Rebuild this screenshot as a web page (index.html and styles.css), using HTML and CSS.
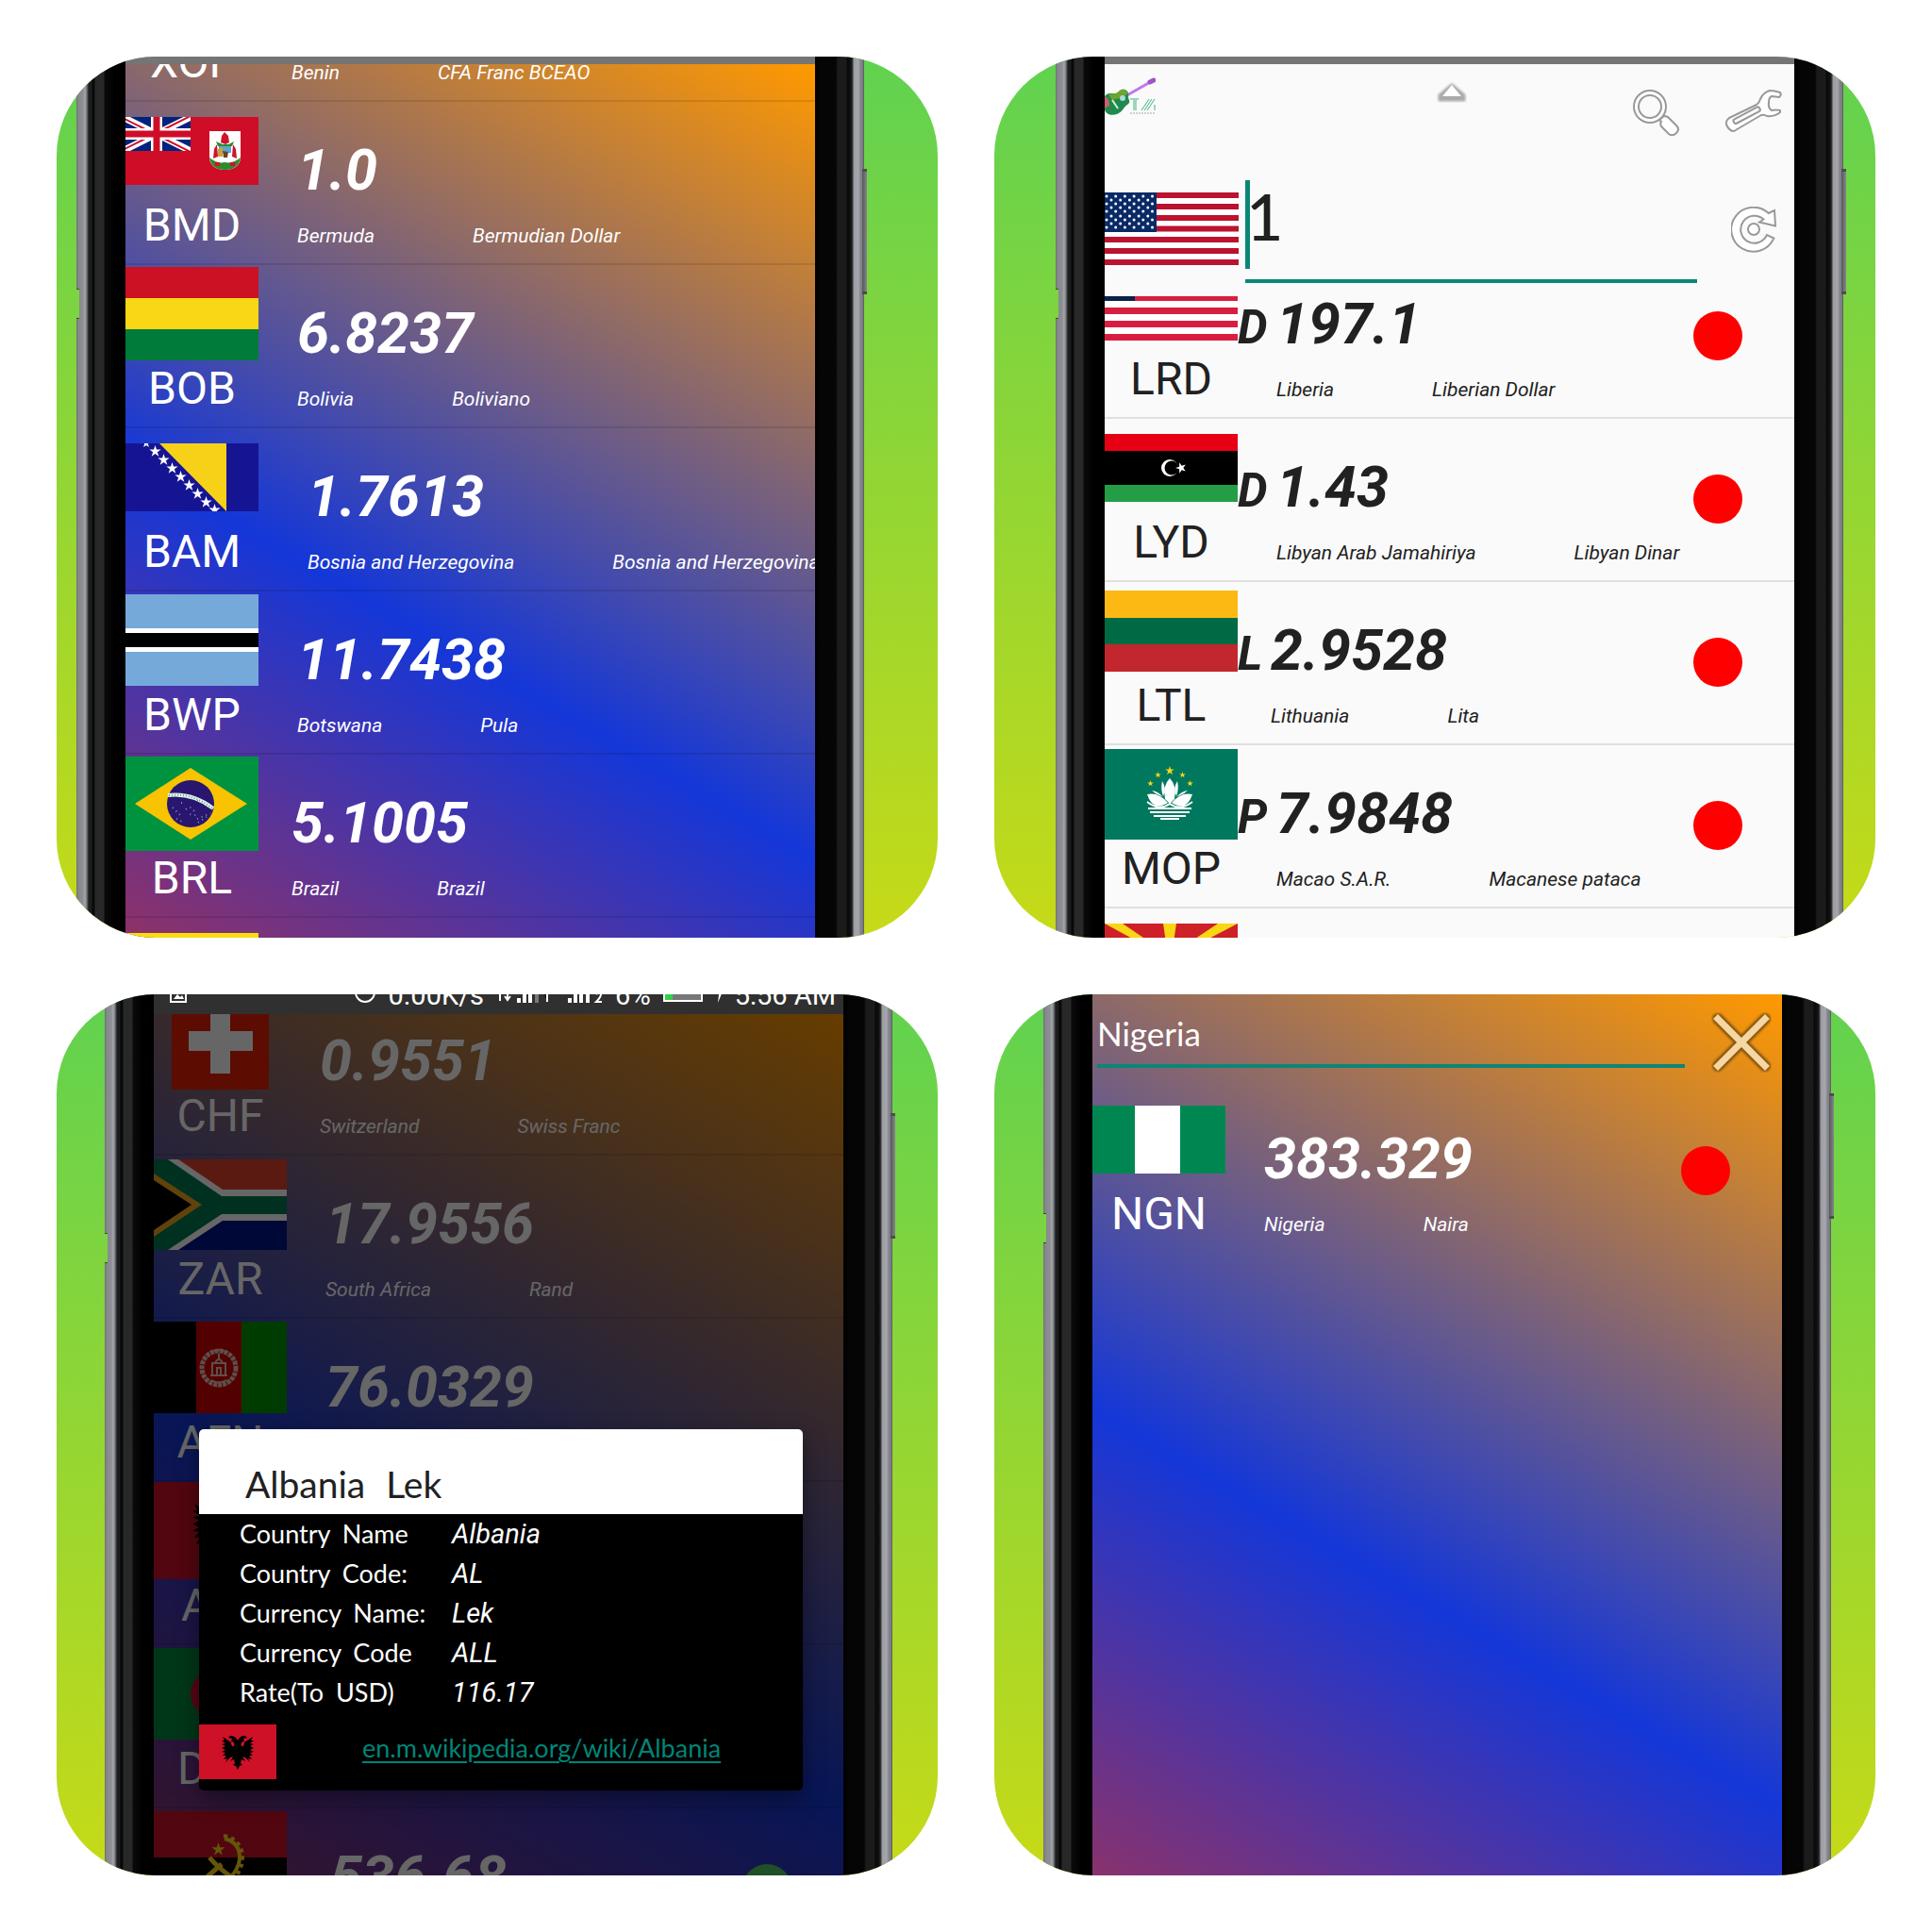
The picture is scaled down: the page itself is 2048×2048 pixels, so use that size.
FILE: index.html
```html
<!DOCTYPE html>
<html lang="en">
<head>
<meta charset="utf-8">
<meta name="viewport" content="width=device-width, initial-scale=1">
<title>Currency rates</title>
<link rel="stylesheet" href="styles.css">
</head>
<body>
<svg class="defs" aria-hidden="true">
  <symbol id="star" viewBox="-1 -1 2 2"><path d="M0 -1L.2245 -.309L.951 -.309L.363 .118L.588 .809L0 .382L-.588 .809L-.363 .118L-.951 -.309L-.2245 -.309Z"/></symbol>
  <symbol id="albania" viewBox="0 0 82 58" preserveAspectRatio="none">
    <path fill="#ce1126" d="M0 0H82V58H0Z"/>
    <path d="M41 17C39 13 34 10 31 14L35 15L34 18C37 18 38 20 37 23C35 24 34 22 34 19L25 13L27 17L24 17L28 20L24 21L28 23L24 25L28 27L24 29L28 30L25 33L29 33L26 37L30 36L28 40L33 35L36 34L33 39L37 37L38 41L36 43L39 44L41 48L43 44L46 43L44 41L45 37L49 39L46 34L49 35L54 40L52 36L56 37L53 33L57 33L54 30L58 29L54 27L58 25L54 23L58 21L54 20L58 17L55 17L57 13L48 19C48 22 47 24 45 23C44 20 45 18 48 18L47 15L51 14C48 10 43 13 41 17Z"/>
  </symbol>
</svg>

<main class="gallery">

  <section class="card card--list">
    <div class="edge edge--left"></div>
    <div class="screen screen--gradient">
      <div class="bar"></div>
      <ul class="rates">
        <li class="row sym-s">
          <div class="unit"><div class="flag"></div><span class="code">XOF</span></div>
          <span class="symbol"></span>
          <div class="info"><strong class="rate">586.2</strong><div class="names"><span>Benin</span><span>CFA Franc BCEAO</span></div></div>
        </li>
        <li class="row sym-m">
          <div class="unit"><div class="flag">
            <svg viewBox="0 0 141 72" width="141" height="72">
              <path fill="#cf0d27" d="M0 0H141V72H0Z"/>
              <path fill="#00247d" d="M0 0H69V36H0Z"/>
              <svg x="0" y="0" width="69" height="36" viewBox="3 0 69 36">
                <path stroke="#fff" stroke-width="7" d="M0 0L72 36M72 0L0 36"/>
                <path stroke="#cf0d27" stroke-width="2" d="M0 1L36 19M72 -1L36 17M36 17L0 35M36 19L72 37"/>
                <path stroke="#fff" stroke-width="12" d="M36 0V36M0 18H72"/>
                <path stroke="#cf0d27" stroke-width="7" d="M36 0V36M0 18H72"/>
              </svg>
              <path fill="#fff" d="M89 15H122V44Q120 56 105.500 56Q91 56 89 44Z"/>
              <path fill="#2f8a2d" d="M89 43Q97 50 105 48Q114 50 122 43Q120 56 105.500 56Q91 56 89 43Z"/>
              <path fill="#cf142b" d="M102 20L105 16L109 20L110 27L106 29L101 27ZM94 34L97 29L98 42L93 44ZM117 34L114 29L113 42L118 44ZM95 48h5v4h-5zM111 48h5v4h-5z"/>
              <path fill="#2f8a2d" d="M96 26L103 29H109L115 26L113 31H98Z"/>
              <path fill="#5aa7cf" d="M99 31H112V38H99Z"/>
              <path fill="#c9a13a" d="M98 34L103 32V42H98Z"/>
              <path fill="#6b4423" d="M103 36L109 37L108 43H104Z"/>
            </svg></div><span class="code">BMD</span></div>
          <span class="symbol"></span>
          <div class="info"><strong class="rate">1.0</strong><div class="names"><span>Bermuda</span><span>Bermudian Dollar</span></div></div>
        </li>
        <li class="row sym-m">
          <div class="unit"><div class="flag">
            <svg viewBox="0 0 141 99" width="141" height="99"><path fill="#cd1125" d="M0 0H141V34H0Z"/><path fill="#f9d616" d="M0 33H141V67H0Z"/><path fill="#007b3a" d="M0 66H141V99H0Z"/></svg></div><span class="code">BOB</span></div>
          <span class="symbol"></span>
          <div class="info"><strong class="rate">6.8237</strong><div class="names"><span>Bolivia</span><span>Boliviano</span></div></div>
        </li>
        <li class="row sym-x">
          <div class="unit"><div class="flag">
            <svg viewBox="0 0 141 72" width="141" height="72"><path fill="#151593" d="M0 0H141V72H0Z"/><path fill="#f7d117" d="M36 0H107V72Z"/>
              <g fill="#fff"><use href="#star" x="17" y="-5" width="10" height="10"/><use href="#star" x="25" y="2" width="13" height="13"/><use href="#star" x="34" y="11" width="13" height="13"/><use href="#star" x="43" y="20" width="13" height="13"/><use href="#star" x="52" y="29" width="13" height="13"/><use href="#star" x="61" y="38" width="13" height="13"/><use href="#star" x="70" y="47" width="13" height="13"/><use href="#star" x="79" y="56" width="13" height="13"/><use href="#star" x="88" y="64" width="13" height="13"/></g></svg></div><span class="code">BAM</span></div>
          <span class="symbol"></span>
          <div class="info"><strong class="rate">1.7613</strong><div class="names"><span>Bosnia and Herzegovina</span><span>Bosnia and Herzegovina</span></div></div>
        </li>
        <li class="row sym-m">
          <div class="unit"><div class="flag">
            <svg viewBox="0 0 141 97" width="141" height="97"><path fill="#75a9d9" d="M0 0H141V97H0Z"/><path fill="#fff" d="M0 36H141V61H0Z"/><path d="M0 41H141V56H0Z"/></svg></div><span class="code">BWP</span></div>
          <span class="symbol"></span>
          <div class="info"><strong class="rate">11.7438</strong><div class="names"><span>Botswana</span><span>Pula</span></div></div>
        </li>
        <li class="row sym-s">
          <div class="unit"><div class="flag">
            <svg viewBox="0 0 141 100" width="141" height="100"><path fill="#00933f" d="M0 0H141V100H0Z"/><path fill="#f8c300" d="M10 50L69 12L129 50L69 88Z"/><circle cx="69" cy="50" r="25" fill="#28166f"/><path fill="none" stroke="#e3f3ee" stroke-width="4" d="M45 41Q71 38 93 55"/><path fill="none" stroke="#5da583" stroke-width="2" stroke-dasharray="1 2" d="M46 41Q71 38 92 55"/>
              <path stroke="#8f88bd" stroke-width="2" stroke-dasharray="1 4" fill="none" d="M50 54L58 62M64 56Q69 51 73 58T66 60M76 66L90 60M54 66L60 69M77 70L86 64M59 49h1M76 47h1"/></svg></div><span class="code">BRL</span></div>
          <span class="symbol"></span>
          <div class="info"><strong class="rate">5.1005</strong><div class="names"><span>Brazil</span><span>Brazil</span></div></div>
        </li>
        <li class="row sym-m">
          <div class="unit"><div class="flag"><svg viewBox="0 0 141 72" width="141" height="72"><path fill="#f9dd12" d="M0 0H141V72H0Z"/><path fill="#fff" d="M0 6L141 40V56L0 20Z"/><path d="M0 20L141 56V66L0 32Z"/></svg></div></div>
        </li>
      </ul>
    </div>
    <div class="edge edge--right"></div>
  </section>

  <section class="card card--convert">
    <div class="edge edge--left"></div>
    <div class="screen screen--light">
      <div class="bar"></div>
      <header class="convert">
        <div class="tools">
          <svg class="logo" viewBox="0 0 54 40" width="54" height="40" role="img" aria-label="Logo">
            <path stroke="#c277ea" stroke-width="3" d="M22 20L50 4"/><path stroke="#a153c8" stroke-width="5" stroke-linecap="round" d="M48 5L52 3"/>
            <path fill="#1f8a4c" d="M0 20C5 14 11 20 15 15C20 10 26 14 25 19C24 23 29 26 24 29C20 31 20 36 13 39C7 41 1 39 0 34Z"/>
            <path fill="#6fa431" d="M4 18C10 17 12 18 16 14C19 11 25 14 24 18L16 22L8 24Z"/><path fill="#c9606f" d="M0 20Q5 22 5 30L0 33Z"/>
            <circle cx="19" cy="22" r="3" fill="#a9d9df"/><path stroke="#d6f0d8" stroke-width="2" d="M8 24L14 33"/>
            <path stroke="#3fb27f" fill="none" d="M27 23H36M31 24V35M33 24V35M39 35L47 23M42 35L50 23M45 35L53 23M53 29V35"/><path stroke="#9aa" stroke-dasharray="2 1" d="M27 38H54"/>
          </svg>
          <button class="icon collapse" aria-label="Collapse"><svg viewBox="0 0 32 22" width="32" height="22"><g class="soft"><path fill="#aaa" stroke="#aaa" stroke-width="3" stroke-linejoin="round" d="M16 3L3 14V19H29V14Z"/></g><path fill="#fff" d="M16 3L6 15H26Z"/></svg></button>
          <button class="icon" aria-label="Search"><svg viewBox="0 0 49 50" width="49" height="50"><g fill="#fff" stroke="#999" stroke-width="2"><path d="M28 32L33 28Q37 28 39 31L46 38Q50 42 46 46Q42 50 38 47L31 40Q28 37 30 34Z"/><circle cx="18" cy="18" r="17"/><circle cx="18" cy="18" r="12" fill="#fafafa"/></g></svg></button>
          <button class="icon" aria-label="Settings"><svg viewBox="0 0 60 46" width="60" height="46"><path fill="#fff" stroke="#999" stroke-width="2" stroke-linejoin="round" d="M58 3Q52 1 47 1Q40 3 37 10Q36 14 33 16L4 30Q0 33 1 37Q4 44 9 44L38 27Q41 26 44 28Q52 29 58 24V22Q54 21 49 22Q45 19 46 14Q46 8 49 7L57 8Q60 5 58 3Z"/><rect x="7" y="25" width="31" height="5" rx="2" transform="rotate(-28 22 27)" fill="#fafafa" stroke="#999" stroke-width="2"/></svg></button>
        </div>
        <div class="amount">
          <svg viewBox="0 0 142 77" width="142" height="77" role="img" aria-label="United States">
            <path fill="#fff" d="M0 0H142V77H0Z"/>
            <path stroke="#bb1230" stroke-width="6" d="M0 3H142M0 15H142M0 27H142M0 38.500H142M0 50H142M0 62H142M0 74H142"/>
            <path fill="#0a2a66" d="M0 0H55V42H0Z"/>
            <path stroke="#fff" stroke-width="3" stroke-linecap="round" stroke-dasharray="0 9.700" d="M2 4H55M2 12H55M2 20H55M2 29H55M2 37H55M7 8H52M7 16H52M7 25H52M7 33H52"/>
          </svg>
          <div class="field"><span class="caret"></span><input aria-label="Amount in US dollars" value="1" inputmode="decimal"></div>
          <button class="icon" aria-label="Refresh"><svg viewBox="0 0 49 49" width="49" height="49"><g fill="#fff" stroke="#999" stroke-width="2"><path d="M39.700 7L46 4L47 20.500L30 16.500L34.500 13.500A14.500 14.500 0 1 0 38 30L45.300 33.500A23.500 23.500 0 1 1 39.700 7Z"/><circle cx="24" cy="24" r="6"/></g></svg></button>
        </div>
      </header>
      <div class="scroller">
      <ul class="rates">
        <li class="row sym-m">
          <div class="unit"><div class="flag">
            <svg viewBox="0 0 141 77" width="141" height="77"><path fill="#fff" d="M0 0H141V77H0Z"/><path stroke="#d81e40" stroke-width="7" d="M0 3.500H141M0 17.500H141M0 31.500H141M0 45.500H141M0 59.500H141M0 73.500H141"/><path fill="#0a2247" d="M0 0H32V35H0Z"/></svg></div><span class="code">LRD</span></div>
          <span class="symbol">D</span>
          <div class="info"><strong class="rate">197.1</strong><div class="names"><span>Liberia</span><span>Liberian Dollar</span></div></div>
          <span class="dot"></span>
        </li>
        <li class="row sym-m">
          <div class="unit"><div class="flag">
            <svg viewBox="0 0 141 72" width="141" height="72"><path d="M0 0H141V72H0Z"/><path fill="#e70013" d="M0 0H141V18H0Z"/><path fill="#239e46" d="M0 54H141V72H0Z"/><circle cx="69" cy="36" r="9" fill="#fff"/><circle cx="71" cy="36" r="7.500"/><use href="#star" x="75" y="30" width="12" height="12" fill="#fff" transform="rotate(-18 81 36)"/></svg></div><span class="code">LYD</span></div>
          <span class="symbol">D</span>
          <div class="info"><strong class="rate">1.43</strong><div class="names"><span>Libyan Arab Jamahiriya</span><span>Libyan Dinar</span></div></div>
          <span class="dot"></span>
        </li>
        <li class="row sym-s">
          <div class="unit"><div class="flag">
            <svg viewBox="0 0 141 86" width="141" height="86"><path fill="#fdb913" d="M0 0H141V29H0Z"/><path fill="#006a44" d="M0 29H141V57H0Z"/><path fill="#c1272d" d="M0 57H141V86H0Z"/></svg></div><span class="code">LTL</span></div>
          <span class="symbol">L</span>
          <div class="info"><strong class="rate">2.9528</strong><div class="names"><span>Lithuania</span><span>Lita</span></div></div>
          <span class="dot"></span>
        </li>
        <li class="row sym-m">
          <div class="unit"><div class="flag">
            <svg viewBox="0 0 141 96" width="141" height="96"><path fill="#00785e" d="M0 0H141V96H0Z"/>
              <g fill="#f8d61b"><use href="#star" x="64" y="18" width="10" height="10"/><use href="#star" x="53" y="24" width="7" height="7"/><use href="#star" x="79" y="24" width="7" height="7"/><use href="#star" x="45" y="33" width="7" height="7"/><use href="#star" x="87" y="33" width="7" height="7"/></g>
              <g fill="#fff"><path d="M69 31Q77 39 74 53L69 58L64 53Q61 39 69 31Z"/><path d="M61 34Q59 42 62 50Q66 42 61 34ZM77 34Q79 42 76 50Q72 42 77 34Z"/><path d="M45 48Q57 45 67 57Q51 67 45 48ZM93 48Q81 45 71 57Q87 67 93 48Z"/><path d="M50 44Q57 45 62 51L58 49Q53 47 50 44ZM88 44Q81 45 76 51L80 49Q85 47 88 44Z"/></g>
              <path fill="none" stroke="#fff" stroke-width="2" d="M45 56Q58 66 69 58Q80 66 93 56M46 63H92M48 67H90M52 71H86M59 74H79"/></svg></div><span class="code">MOP</span></div>
          <span class="symbol">P</span>
          <div class="info"><strong class="rate">7.9848</strong><div class="names"><span>Macao S.A.R.</span><span>Macanese pataca</span></div></div>
          <span class="dot"></span>
        </li>
        <li class="row sym-m">
          <div class="unit"><div class="flag">
            <svg viewBox="0 0 141 72" width="141" height="72"><path fill="#ce2028" d="M0 0H141V72H0Z"/><path fill="#f9d616" d="M0 0H19L69 34L66 36ZM141 0H120L69 34L72 36ZM62 0H76L71 34H67ZM0 72H19L69 38L66 36ZM141 72H120L69 38L72 36ZM62 72H76L71 38H67ZM0 29V43L60 36ZM141 29V43L80 36Z"/><circle cx="69" cy="36" r="11" fill="#f9d616" stroke="#ce2028" stroke-width="2"/></svg></div></div>
        </li>
      </ul>
      </div>
    </div>
    <div class="edge edge--right"></div>
  </section>

  <section class="card card--details">
    <div class="edge edge--left"></div>
    <div class="screen screen--gradient">
      <div class="status">
        <svg class="status-shot" viewBox="0 0 18 18" width="18" height="18"><path fill="none" stroke="#fff" stroke-width="2" d="M1 1H17V17H1Z"/><path fill="#fff" d="M4 14L8 9L11 12L13 10L15 14Z"/></svg>
        <svg viewBox="0 0 22 22" width="22" height="22"><circle cx="11" cy="11" r="10" fill="none" stroke="#fff" stroke-width="2"/></svg>
        <span class="status-net">0.00K/s</span>
        <svg viewBox="0 0 62 24" width="62" height="24"><path stroke="#fff" stroke-width="2" fill="none" d="M4 22V8M1 12L4 8L7 12M12 4V20M9 17L12 21L15 17"/><path stroke="#fff" stroke-width="4" d="M24 24V19M30 24V15M36 24V10"/><path stroke="#777" stroke-width="4" d="M43 24V6"/><path stroke="#fff" stroke-width="2" d="M54 23V12L51 14"/></svg>
        <svg viewBox="0 0 38 24" width="38" height="24"><path stroke="#fff" stroke-width="4" d="M3 24V19M9 24V15M15 24V10M22 24V6"/><path stroke="#fff" stroke-width="2" fill="none" d="M31 15Q36 11 36 15Q36 18 31 23H37"/></svg>
        <span>6%</span>
        <svg viewBox="0 0 42 22" width="42" height="22"><path fill="#777" stroke="#fff" stroke-width="2" d="M1 1H41V20H1Z"/><path fill="#35d04a" d="M2 2H10V19H2Z"/></svg>
        <svg viewBox="0 0 8 20" width="8" height="20"><path fill="#fff" d="M5 0L0 11H4L3 20L8 8H4Z"/></svg>
        <span class="status-time">5:56 AM</span>
      </div>
      <ul class="rates">
        <li class="row sym-s">
          <div class="unit"><div class="flag"><svg viewBox="0 0 103 103" width="103" height="103"><path fill="#e61e00" d="M0 0H103V103H0Z"/><path fill="#fff" d="M41 18H62V41H86V62H62V86H41V62H18V41H41Z"/></svg></div><span class="code">CHF</span></div>
          <span class="symbol"></span>
          <div class="info"><strong class="rate">0.9551</strong><div class="names"><span>Switzerland</span><span>Swiss Franc</span></div></div>
        </li>
        <li class="row sym-m">
          <div class="unit"><div class="flag"><svg viewBox="0 0 141 96" width="141" height="96"><path fill="#e1432d" d="M0 0H141V48H0Z"/><path fill="#001489" d="M0 48H141V96H0Z"/><path fill="#fff" d="M0 0H26L73 32H141V65H73L26 96H0Z"/><path fill="#007a50" d="M0 0H15L72 39H141V58H72L15 96H0Z"/><path fill="#f0a61c" d="M0 15L51 48L0 82Z"/><path d="M0 22L40 48L0 75Z"/></svg></div><span class="code">ZAR</span></div>
          <span class="symbol"></span>
          <div class="info"><strong class="rate">17.9556</strong><div class="names"><span>South Africa</span><span>Rand</span></div></div>
        </li>
        <li class="row sym-m">
          <div class="unit"><div class="flag"><svg viewBox="0 0 141 97" width="141" height="97"><path d="M0 0H45V97H0Z"/><path fill="#cd0000" d="M45 0H93V97H45Z"/><path fill="#009600" d="M93 0H141V97H93Z"/><g fill="none" stroke="#e9c4b8"><circle cx="69" cy="49" r="18" stroke-width="5" stroke-dasharray="4 1"/><path stroke-width="2" d="M62 56V44H76V56M60 57H78M65 44Q69 36 73 44M69 40V34M61 33Q69 27 77 33M67 56V49H71V56M61 62Q69 67 77 62"/></g></svg></div><span class="code">AFN</span></div>
          <span class="symbol"></span>
          <div class="info"><strong class="rate">76.0329</strong></div>
        </li>
        <li class="row sym-m">
          <div class="unit"><div class="flag"><svg width="141" height="103"><use href="#albania" width="141" height="103"/></svg></div><span class="code">ALL</span></div>
        </li>
        <li class="row sym-s">
          <div class="unit"><div class="flag"><svg viewBox="0 0 141 97" width="141" height="97"><path fill="#fff" d="M0 0H141V97H0Z"/><path fill="#008a3c" d="M0 0H69V97H0Z"/><path fill="#d21034" d="M82 34A24 24 0 1 0 82 63A19 19 0 1 1 82 34Z"/></svg></div><span class="code">DZD</span></div>
          <span class="symbol"></span>
          <div class="info"><strong class="rate">128.6</strong><div class="names"><span>Algeria</span><span>Algerian Dinar</span></div></div>
        </li>
        <li class="row sym-l">
          <div class="unit"><div class="flag"><svg viewBox="0 0 141 97" width="141" height="97"><path fill="#ce1126" d="M0 0H141V49H0Z"/><path d="M0 49H141V97H0Z"/><path fill="none" stroke="#f9d616" stroke-width="4" d="M75 29Q92 33 91 51Q88 68 74 74"/><path fill="none" stroke="#f9d616" stroke-width="4" stroke-dasharray="4 4" d="M74 26Q95 30 94 52Q91 70 76 78"/><path fill="none" stroke="#f9d616" stroke-width="5" d="M59 49Q68 60 88 74M56 70L72 56"/><use href="#star" x="61" y="33" width="15" height="15" fill="#f9d616"/></svg></div></div>
          <span class="symbol"></span>
          <div class="info"><strong class="rate">536.68</strong></div>
          <span class="dot dot--up"></span>
        </li>
      </ul>
      <div class="scrim"></div>
      <div class="dialog" role="dialog" aria-labelledby="dialog-title">
        <h2 id="dialog-title">Albania <span class="next-title">Lek</span></h2>
        <dl>
          <dt>Country <span class="next">Name</span></dt><dd>Albania</dd>
          <dt>Country <span class="next">Code:</span></dt><dd>AL</dd>
          <dt>Currency <span class="next">Name:</span></dt><dd>Lek</dd>
          <dt>Currency <span class="next">Code</span></dt><dd>ALL</dd>
          <dt>Rate(To <span class="next">USD)</span></dt><dd>116.17</dd>
        </dl>
        <div class="source">
          <svg width="82" height="58" role="img" aria-label="Flag of Albania"><use href="#albania" width="82" height="58"/></svg>
          <a href="https://en.m.wikipedia.org/wiki/Albania">en.m.wikipedia.org/wiki/Albania</a>
        </div>
      </div>
    </div>
    <div class="edge edge--right"></div>
  </section>

  <section class="card card--search">
    <div class="edge edge--left"></div>
    <div class="screen screen--gradient">
      <header class="search">
        <input aria-label="Search country" value="Nigeria">
        <button class="icon" aria-label="Close"><svg viewBox="0 0 64 64" width="64" height="64"><g class="soft"><path stroke="#85550f" stroke-width="12" stroke-linecap="round" d="M7 7L57 57M57 7L7 57"/></g><path stroke="#f6d6a2" stroke-width="7" stroke-linecap="square" d="M7 7L57 57M57 7L7 57"/></svg></button>
      </header>
      <ul class="rates">
        <li class="row sym-m">
          <div class="unit"><div class="flag"><svg viewBox="0 0 141 72" width="141" height="72"><path fill="#008751" d="M0 0H141V72H0Z"/><path fill="#fff" d="M45 0H93V72H45Z"/></svg></div><span class="code">NGN</span></div>
          <span class="symbol"></span>
          <div class="info"><strong class="rate">383.329</strong><div class="names"><span>Nigeria</span><span>Naira</span></div></div>
          <span class="dot"></span>
        </li>
      </ul>
    </div>
    <div class="edge edge--right"></div>
  </section>

</main>
</body>
</html>
```
FILE: styles.css
```css
* { box-sizing: border-box; }
body { margin: 0; background: #fff; font-family: Roboto, sans-serif; }
ul, dl, dd, h2 { margin: 0; padding: 0; }
ul { list-style: none; }
svg { display: block; flex: none; }
.defs { position: absolute; width: 0; height: 0; }

.gallery {
  display: grid;
  grid-template-columns: 1fr 1fr;
  gap: 60px;
  padding: 60px;
}

/* Cards and phone frames */
.card {
  display: flex;
  aspect-ratio: 1;
  overflow: hidden;
  border-radius: 105px;
  background: linear-gradient(#60d250, #c7da17);
}
.card--list { --keys: 119px; padding: 0 78px 0 21px; }
.card--convert { --keys: 119px; padding: 0 34px 0 65px; }
.card--details { --keys: 126px; padding: 0 48px 0 51px; }
.card--search { --keys: 105px; padding: 0 47px 0 52px; }

.edge { position: relative; flex: none; width: 52px; }
.edge--left {
  background: linear-gradient(90deg, #6f7073 0, #86878c 2px, #8f9095 7px, #a5a7ad 9px, #75777c 11px, #1b1e1d 13px, #1b1e1d 16px, #060606 17px, #0a0a0a 19px, #282828 20px, #282828 29px, #0a0a0a 30px, #050505 36px, #000 40px);
}
.edge--right {
  background: linear-gradient(90deg, #000 0, #050505 6px, #050505 22px, #1b1b1b 24px, #1b1b1b 33px, #080808 34px, #111 38px, #3b3c3e 40px, #9b9da3 41px, #a5a7ad 46px, #85878c 48px, #77797e 51px, #4c4d50 52px);
}
.edge--left::before,
.edge--right::after { content: ""; position: absolute; top: var(--keys); }
.edge--left::before {
  left: 0;
  top: calc(var(--keys) + 127px);
  width: 3px;
  height: 30px;
  background: #7dd340;
  border-block: 1px solid #3d4a33;
}
.edge--right::after {
  left: 50px;
  width: 5px;
  height: 127px;
  background: linear-gradient(90deg, #55575a, #85878c);
  border-block: 3px solid #4c4e4c;
}

.screen {
  position: relative;
  flex: 1;
  min-width: 0;
  overflow: hidden;
  display: flex;
  flex-direction: column;
  color: #fff;
}
.screen--gradient {
  background: linear-gradient(210deg, #ff9900, #1437d8 50%, #df2e1e) 0 8px / 100% 1260px no-repeat;
}
.screen--light { background: #fafafa; color: #212121; }
.card--search .screen { background-position: 0 0; background-size: 100% 1300px; }
.card--details .screen { background-position: 0 21px; }
.bar { position: relative; z-index: 1; flex: none; height: 8px; background: #757575; }

/* Rate rows */
.rates { flex: none; }
.card--list .rates { margin-top: -133px; }
.card--convert .rates { margin-top: -43px; }
.card--details .rates { margin-top: -23px; }
.scroller { flex: 1; min-height: 0; overflow: hidden; }
.row {
  display: flex;
  height: 173px;
  border-bottom: 2px solid rgba(0, 0, 0, .1);
}
.card--search .row { border-bottom: 0; }
.unit { flex: none; width: 141px; text-align: center; }
.flag { display: flex; align-items: center; justify-content: center; height: 103px; }
.code { display: block; font-size: 48px; line-height: 56px; }
.symbol { flex: none; padding-top: 46px; font: italic bold 50px/60px Roboto, sans-serif; }
.sym-s .symbol { width: 35px; }
.sym-m .symbol { width: 41px; }
.sym-l .symbol { width: 46px; }
.sym-x .symbol { width: 52px; }
.info { flex: 1; min-width: 0; padding-top: 36px; white-space: nowrap; font-style: italic; }
.rate { display: block; font-size: 61px; line-height: 72px; }
.names { display: flex; gap: 104px; margin-top: 22px; font-size: 21px; line-height: 24px; }
.names span { flex: none; }
.dot { flex: none; width: 52px; height: 52px; margin: 59px 55px 0 0; border-radius: 50%; background: #f00; }
.dot--up { background: #4fc763; }

/* Controls */
.icon { flex: none; padding: 0; border: 0; background: none; }
.soft { filter: blur(1px); }
input {
  min-width: 0;
  border: 0;
  border-bottom: 4px solid #0b8677;
  border-radius: 0;
  outline: 0;
  background: none;
  color: inherit;
}

.convert { flex: none; height: 246px; }
.tools { display: flex; align-items: flex-start; gap: 49px; height: 123px; padding: 27px 13px 0 0; }
.logo { margin: -13px auto 0 0; }
.tools .collapse { margin: -8px 127px 0 0; }
.amount { display: flex; align-items: flex-start; padding-right: 18px; }
.amount > svg { margin-top: 13px; }
.amount > .icon { margin: 28px 0 0 36px; }
.field { display: flex; flex: 1; min-width: 0; margin-left: 7px; border-bottom: 4px solid #0b8677; }
.caret { width: 5px; height: 94px; margin-right: -4px; background: #0b8677; }
.field input { flex: 1; height: 105px; padding: 0 0 31px; border: 0; font: 500 68px/74px Lato, sans-serif; }

.search { display: flex; align-items: flex-start; gap: 28px; height: 102px; padding: 0 11px 0 5px; }
.search input { flex: 1; height: 78px; padding: 8px 0 0; font: 35px/42px Lato, sans-serif; }
.search .icon { margin-top: 19px; }

/* Status bar */
.status {
  position: relative;
  z-index: 3;
  flex: none;
  display: flex;
  align-items: flex-end;
  gap: 13px;
  height: 21px;
  padding: 0 8px 12px 17px;
  background: #303030;
  font-size: 29px;
  line-height: 16px;
}
.status-shot { margin-right: auto; }

/* Details dialog */
.scrim { position: absolute; inset: 0; z-index: 1; background: rgba(0, 0, 0, .6); }
.dialog {
  position: absolute;
  z-index: 2;
  top: 461px;
  left: 48px;
  right: 43px;
  overflow: hidden;
  border-radius: 5px;
  background: #000;
  box-shadow: 0 8px 24px rgba(0, 0, 0, .4);
}
.dialog h2 { padding: 35px 49px 9px; background: #fff; color: #212121; font: 39px/46px Lato, sans-serif; }
.next-title { margin-left: 12px; }
.next { margin-left: 6px; }
.dialog dl { display: grid; grid-template-columns: 225px 1fr; gap: 2px 0; padding: 1px 0 0 43px; line-height: 40px; }
.dialog dt { font-family: Lato, sans-serif; font-size: 27px; }
.dialog dd { font-size: 29px; font-style: italic; }
.source { display: flex; gap: 91px; padding: 14px 0 12px; }
.source a { color: #008577; font: 27px/50px Lato, sans-serif; text-decoration-thickness: 2px; text-underline-offset: 4px; }
```
